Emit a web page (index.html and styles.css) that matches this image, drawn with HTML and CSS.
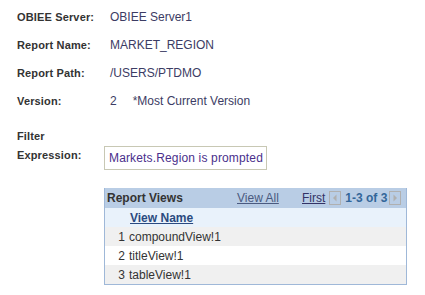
FILE: index.html
```html
<!DOCTYPE html>
<html>
<head>
<meta charset="utf-8">
<link rel="stylesheet" href="styles.css">
</head>
<body>
<div class="page">
  <div class="field"><span class="label">OBIEE Server:</span><span class="value">OBIEE Server1</span></div>
  <div class="field"><span class="label">Report Name:</span><span class="value">MARKET_REGION</span></div>
  <div class="field"><span class="label">Report Path:</span><span class="value">/USERS/PTDMO</span></div>
  <div class="field"><span class="label">Version:</span><span class="value">2<span class="note">*Most Current Version</span></span></div>
  <div class="filter">
    <span class="label filter-label">Filter<br>Expression:</span>
    <span class="box">Markets.Region is prompted</span>
  </div>
  <div class="grid">
    <div class="grid-head">
      <span class="grid-title">Report Views</span>
      <span class="link viewall">View All</span>
      <span class="link first">First</span>
      <span class="arrow"><svg width="10" height="12" viewBox="0 0 10 12"><path d="M6.5 2.5 L3 6 L6.5 9.5 Z" fill="#b0b0b0"/></svg></span>
      <span class="count">1-3 of 3</span>
      <span class="arrow"><svg width="10" height="12" viewBox="0 0 10 12"><path d="M3.5 2.5 L7 6 L3.5 9.5 Z" fill="#b0b0b0"/></svg></span>
    </div>
    <div class="col-head"><span class="link colname">View Name</span></div>
    <div class="row alt"><span class="num">1</span>compoundView!1</div>
    <div class="row"><span class="num">2</span>titleView!1</div>
    <div class="row alt"><span class="num">3</span>tableView!1</div>
  </div>
</div>
</body>
</html>
```
FILE: styles.css
```css
body {
  margin: 0;
  background: #ffffff;
  font-family: Arial, "Liberation Sans", sans-serif;
  font-size: 12px;
  color: #333333;
}
.page {
  padding: 10px 0 0 17px;
}
.field {
  display: flex;
  height: 28px;
  align-items: flex-start;
  line-height: 14px;
}
.label {
  width: 93px;
  font-weight: bold;
  font-size: 11px;
  letter-spacing: 0.15px;
  color: #333333;
}
.value {
  color: #3c3c64;
  font-size: 12px;
}
.note {
  margin-left: 16px;
}
.filter {
  display: flex;
  align-items: flex-start;
  margin-top: 5px;
}
.filter-label {
  width: 87px;
  line-height: 19px;
}
.box {
  display: inline-block;
  box-sizing: border-box;
  height: 24px;
  line-height: 22px;
  margin-top: 19px;
  border: 1px solid #c8c8b4;
  padding: 0 3px 0 4px;
  font-size: 12px;
  letter-spacing: 0.15px;
  color: #4a2f8c;
}
.grid {
  margin: 18px 0 0 87px;
  width: 303px;
  box-sizing: border-box;
  border: 1px solid #9fb8d8;
  border-top: none;
}
.grid-head {
  display: flex;
  align-items: center;
  height: 20px;
  background: #b9cde5;
  padding-left: 2px;
  font-size: 12px;
}
.grid-title {
  font-weight: bold;
  color: #333333;
  width: 130px;
}
.link {
  color: #333366;
  text-decoration: underline;
}
.viewall {
  width: 65px;
  color: #4a5a80;
}
.first {
  margin-right: 4px;
}
.arrow {
  display: inline-flex;
  width: 12px;
  height: 14px;
  border: 1px solid #b0b0b0;
  box-sizing: border-box;
  align-items: center;
  justify-content: center;
}
.count {
  font-weight: bold;
  color: #336699;
  margin: 0 2px 0 4px;
}
.col-head {
  height: 19px;
  background: #e9f2fb;
  display: flex;
  align-items: center;
  padding-left: 25px;
  font-size: 12px;
}
.colname {
  font-weight: bold;
  color: #2a4a80;
}
.row {
  height: 19px;
  display: flex;
  align-items: center;
  font-size: 12px;
  color: #333333;
  background: #ffffff;
}
.row.alt {
  background: #f0f0f0;
}
.num {
  width: 20px;
  text-align: right;
  margin-right: 4px;
}
```
